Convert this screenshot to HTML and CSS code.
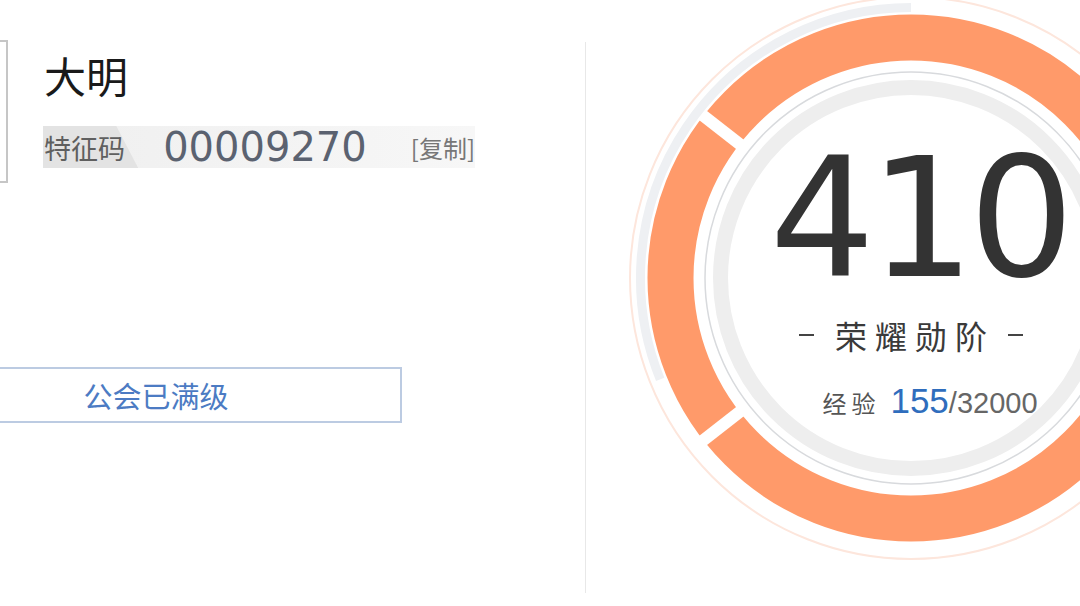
FILE: index.html
```html
<!DOCTYPE html>
<html lang="zh-CN">
<head>
  <meta charset="utf-8">
  <title>荣耀勋阶</title>
  <link rel="stylesheet" href="styles.css">
</head>
<body>
  <main class="page">
    <!-- player info -->
    <section class="profile-pane">
      <div class="profile">
        <div class="avatar"></div>
        <div class="info">
          <h1 class="name">大明</h1>
          <div class="code-row">
            <span class="code-label">特征码</span>
            <span class="code-value">00009270</span>
            <span class="code-copy">[复制]</span>
          </div>
        </div>
      </div>
      <div class="guild-status">公会已满级</div>
    </section>

    <div class="divider"></div>

    <!-- rank gauge -->
    <section class="rank-pane">
      <div class="gauge">
        <svg class="gauge-ring" viewBox="0 0 570 570" width="570" height="570">
          <circle cx="285" cy="285" r="281" fill="none" stroke="#fde6dc" stroke-width="2"/>
          <circle cx="285" cy="285" r="240.5" fill="none" stroke="#ff9a6a" stroke-width="46"/>
          <line x1="116.4" y1="416.8" x2="73.8" y2="450.1" stroke="#fff" stroke-width="12"/>
          <line x1="116.4" y1="153.2" x2="73.8" y2="119.9" stroke="#fff" stroke-width="12"/>
          <path d="M34.2 386.4 A270.5 270.5 0 0 1 285 14.5" fill="none" stroke="#eef0f3" stroke-width="9"/>
          <circle cx="285" cy="285" r="206" fill="none" stroke="#d8dadd" stroke-width="1.5"/>
          <circle cx="285" cy="285" r="190.5" fill="none" stroke="#eeeeee" stroke-width="15"/>
        </svg>
        <div class="readout">
          <div class="score">410</div>
          <div class="title"><span>荣耀勋阶</span></div>
          <div class="exp">
            <span class="exp-label">经验</span>
            <span class="exp-now">155</span>
            <span class="exp-max">/32000</span>
          </div>
        </div>
      </div>
    </section>
  </main>
</body>
</html>
```

FILE: styles.css
```css
body { margin: 0; background: #fff; font-family: "Noto Sans CJK SC", sans-serif; overflow: hidden; }
.page { display: flex; width: 1080px; height: 606px; overflow: hidden; }

/* left side */
.profile-pane { width: 585px; flex: none; padding-top: 40px; box-sizing: border-box; }
.profile { display: flex; align-items: flex-start; }
.avatar { width: 140px; height: 143px; margin-left: -132px; border: 2px solid #c6c6c6; box-sizing: border-box; flex: none; }
.info { margin-left: 36px; }
.name { margin: 10px 0 0; font-size: 42px; line-height: 50px; font-weight: 400; color: #1a1a1a; }
.code-row { position: relative; z-index: 0; display: flex; align-items: center; width: 432px; height: 42px; margin: 26px 0 0 -1px; background: linear-gradient(to right, #efefef, #f7f7f7); }
.code-label { position: relative; width: 97px; height: 100%; display: flex; align-items: center; padding-left: 1px; box-sizing: border-box; font-size: 27px; color: #5f5f5f; }
.code-label::before { content: ""; position: absolute; inset: 0; z-index: -1; background: #e3e3e3; clip-path: polygon(0 0, 77% 0, 100% 100%, 0 100%); }
.code-value { margin-left: 25px; font-family: "DejaVu Sans", sans-serif; font-size: 40px; color: #5b6270; }
.code-copy { margin-left: 44px; font-size: 24px; color: #777; white-space: nowrap; }
.guild-status { display: flex; align-items: center; justify-content: center; width: 492px; height: 56px; margin: 184px 0 0 -90px; border: 2px solid #bccbe2; box-sizing: border-box; font-size: 29px; color: #4c7bc3; }

.divider { width: 1px; flex: none; margin: 42px 0 13px; background: #e8e8e8; }

/* right side */
.rank-pane { flex: 1; padding-left: 40px; margin-top: -7px; overflow: hidden; }
.gauge { display: grid; width: 570px; height: 570px; }
.gauge > * { grid-area: 1 / 1; }
.readout { display: flex; flex-direction: column; align-items: center; padding-top: 161px; }
.score { font-family: "DejaVu Sans", sans-serif; font-size: 166px; line-height: 130px; letter-spacing: -6px; margin-left: 16px; color: #333; }
.title { display: flex; align-items: center; gap: 21px; margin-top: 31px; font-size: 32px; line-height: 40px; color: #3a3a3a; }
.title span { letter-spacing: 8px; margin-right: -8px; }
.title::before, .title::after { content: ""; width: 15px; height: 2px; background: #444; }
.exp { display: flex; align-items: baseline; margin: 26px 0 0 38px; line-height: 40px; }
.exp-label { font-size: 24px; letter-spacing: 5px; color: #555; margin-right: 10px; }
.exp-now { font-family: "Liberation Sans", sans-serif; font-size: 35px; color: #2f6dbd; }
.exp-max { font-family: "Liberation Sans", sans-serif; font-size: 29px; color: #666; }
```
